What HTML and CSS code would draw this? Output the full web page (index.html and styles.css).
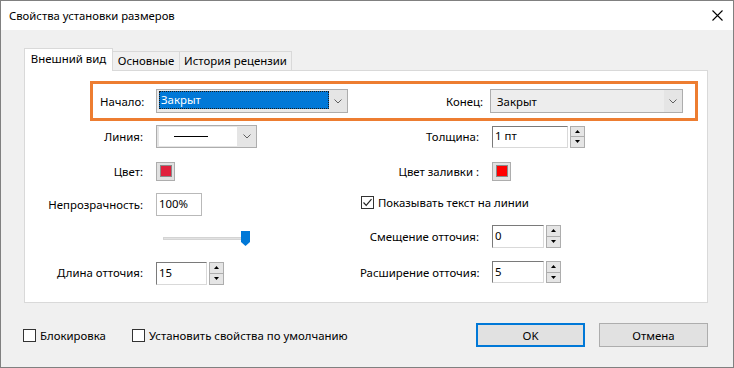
FILE: index.html
```html
<!DOCTYPE html>
<html lang="ru">
<head>
<meta charset="utf-8">
<title>Свойства установки размеров</title>
<link rel="stylesheet" href="styles.css">
</head>
<body>
<div class="window">
  <div class="titlebar">
    <span class="title">Свойства установки размеров</span>
    <svg class="close" width="11" height="11" viewBox="0 0 11 11"><path d="M0.5 0.5L10.5 10.5M10.5 0.5L0.5 10.5" stroke="#000" stroke-width="1.1" fill="none"/></svg>
  </div>
  <div class="content">
    <div class="tabs">
      <div class="tab tab-active">Внешний вид</div>
      <div class="tab tab-2">Основные</div>
      <div class="tab tab-3">История рецензии</div>
    </div>
    <div class="panel">
      <div class="highlight">
        <span class="hl-label">Начало:</span>
        <div class="combo combo-start">
          <span class="combo-text"><span class="combo-sel">Закрыт</span></span>
          <span class="combo-arrow"><svg width="8" height="5" viewBox="0 0 8 5"><path d="M0.5 0.5L4 4L7.5 0.5" stroke="#606060" fill="none"/></svg></span>
        </div>
        <span class="hl-label hl-label-end">Конец:</span>
        <div class="combo combo-end">
          <span class="combo-text combo-plain">Закрыт</span>
          <span class="combo-arrow"><svg width="8" height="5" viewBox="0 0 8 5"><path d="M0.5 0.5L4 4L7.5 0.5" stroke="#606060" fill="none"/></svg></span>
        </div>
      </div>

      <div class="grid">
        <span class="lbl">Линия:</span>
        <div class="cell">
          <div class="combo combo-line">
            <span class="line-box"><span class="line-sample"></span></span>
            <span class="combo-arrow"><svg width="8" height="5" viewBox="0 0 8 5"><path d="M0.5 0.5L4 4L7.5 0.5" stroke="#606060" fill="none"/></svg></span>
          </div>
        </div>
        <span class="lbl">Толщина:</span>
        <div class="cell">
          <div class="field"><span class="input input-thick">1 пт</span><span class="spin"><span class="spin-btn"><svg width="5" height="3" viewBox="0 0 5 3"><path d="M2.5 0L5 3H0Z" fill="#000"/></svg></span><span class="spin-btn"><svg width="5" height="3" viewBox="0 0 5 3"><path d="M0 0H5L2.5 3Z" fill="#000"/></svg></span></span></div>
        </div>

        <span class="lbl">Цвет:</span>
        <div class="cell"><span class="swatch"><span class="swatch-color swatch-crimson"></span></span></div>
        <span class="lbl">Цвет заливки :</span>
        <div class="cell"><span class="swatch"><span class="swatch-color swatch-red"></span></span></div>

        <span class="lbl">Непрозрачность:</span>
        <div class="cell"><span class="input input-opacity">100%</span></div>
        <div class="cell span2 check-cell">
          <span class="checkbox"><svg width="11" height="11" viewBox="0 0 11 11"><path d="M1.5 5.5L4.2 8.3L9.5 2.2" stroke="#222" stroke-width="1.2" fill="none"/></svg></span>
          <span>Показывать текст на линии</span>
        </div>

        <span class="lbl"></span>
        <div class="cell">
          <div class="slider">
            <span class="slider-track"></span>
            <svg class="slider-thumb" width="9" height="15" viewBox="0 0 9 15"><path d="M0 0H9V11L4.5 15L0 11Z" fill="#0078d7"/></svg>
          </div>
        </div>
        <span class="lbl">Смещение отточия:</span>
        <div class="cell">
          <div class="field"><span class="input input-num">0</span><span class="spin"><span class="spin-btn"><svg width="5" height="3" viewBox="0 0 5 3"><path d="M2.5 0L5 3H0Z" fill="#000"/></svg></span><span class="spin-btn"><svg width="5" height="3" viewBox="0 0 5 3"><path d="M0 0H5L2.5 3Z" fill="#000"/></svg></span></span></div>
        </div>

        <span class="lbl">Длина отточия:</span>
        <div class="cell cell-low">
          <div class="field"><span class="input input-len">15</span><span class="spin"><span class="spin-btn"><svg width="5" height="3" viewBox="0 0 5 3"><path d="M2.5 0L5 3H0Z" fill="#000"/></svg></span><span class="spin-btn"><svg width="5" height="3" viewBox="0 0 5 3"><path d="M0 0H5L2.5 3Z" fill="#000"/></svg></span></span></div>
        </div>
        <span class="lbl">Расширение отточия:</span>
        <div class="cell">
          <div class="field"><span class="input input-num input-short">5</span><span class="spin spin-short"><span class="spin-btn"><svg width="5" height="3" viewBox="0 0 5 3"><path d="M2.5 0L5 3H0Z" fill="#000"/></svg></span><span class="spin-btn"><svg width="5" height="3" viewBox="0 0 5 3"><path d="M0 0H5L2.5 3Z" fill="#000"/></svg></span></span></div>
        </div>
      </div>
    </div>

    <div class="footer">
      <label class="foot-check foot-check-1"><span class="checkbox"></span><span>Блокировка</span></label>
      <label class="foot-check"><span class="checkbox"></span><span>Установить свойства по умолчанию</span></label>
      <div class="buttons">
        <button class="btn btn-default">OK</button>
        <button class="btn">Отмена</button>
      </div>
    </div>
  </div>
</div>
</body>
</html>
```

FILE: styles.css
```css
* { box-sizing: border-box; }
html, body { margin: 0; padding: 0; }
body {
  width: 734px;
  height: 368px;
  overflow: hidden;
  font-family: "Noto Sans", "Open Sans", sans-serif;
  font-size: 11.4px;
  color: #000;
}
.window {
  width: 734px;
  height: 368px;
  border: 1px solid #808080;
  background: #f0f0f0;
  display: flex;
  flex-direction: column;
}
.titlebar {
  height: 29px;
  flex-shrink: 0;
  background: #fff;
  display: flex;
  align-items: center;
  justify-content: space-between;
  padding: 0 10px 0 8px;
}
.title { line-height: 16px; font-size: 11.3px; }
.close { display: block; }

.content {
  flex: 1;
  padding: 18px 25px 0 23px;
}
.tabs {
  display: flex;
  align-items: flex-end;
  height: 22px;
}
.tab {
  height: 19px;
  line-height: 17px;
  text-align: center;
  background: #f0f0f0;
  border: 1px solid #d9d9d9;
  border-left: none;
  border-bottom: none;
  white-space: nowrap;
}
.tab-active {
  width: 89px;
  height: 23px;
  line-height: 20px;
  margin-bottom: -1px;
  background: #fff;
  border-left: 1px solid #d9d9d9;
  position: relative;
  z-index: 1;
}
.tab-2 { width: 67px; }
.tab-3 { width: 112px; }

.panel {
  width: 684px;
  height: 233px;
  border: 1px solid #d9d9d9;
  background: #fff;
}

.highlight {
  margin: 10px 0 0 65px;
  width: 608px;
  height: 40px;
  border: 3px solid #ed7d31;
  display: flex;
  align-items: center;
  padding: 0 12px 0 7px;
}
.hl-label { width: 56px; white-space: nowrap; }
.hl-label-end { flex: 1; text-align: right; padding-right: 7px; }

.combo {
  display: flex;
  height: 24px;
  border: 1px solid #adadad;
  background: #e9e9e9;
}
.combo-start { width: 192px; }
.combo-end { width: 193px; }
.combo-text {
  flex: 1;
  display: flex;
  padding: 1px 0 3px 2px;
}
.combo-sel {
  flex: 1;
  background: #0078d7;
  color: #fff;
  padding-left: 2px;
  line-height: 17px;
  outline: 1px dotted #1a1a1a;
  outline-offset: -1px;
}
.combo-plain {
  padding: 0 0 0 6px;
  align-items: center;
  background: #ededed;
}
.combo-arrow {
  width: 18px;
  display: flex;
  align-items: center;
  justify-content: center;
  background: #e5e5e5;
}
.combo-arrow svg { display: block; }

.grid {
  display: grid;
  grid-template-columns: 131px 204px 132px 1fr;
  grid-template-rows: 31px 38px 28px 36px 36px;
  align-items: center;
}
.lbl {
  text-align: right;
  padding-right: 13px;
  white-space: nowrap;
}
.cell { display: flex; align-items: center; }
.span2 { grid-column: span 2; }

.combo-line {
  width: 101px;
  height: 23px;
  background: #e5e5e5;
}
.line-box {
  flex: 1;
  margin: 1px 0 1px 2px;
  background: #fff;
  display: flex;
  align-items: center;
  padding-left: 15px;
}
.line-sample {
  width: 34px;
  height: 1px;
  background: #000;
}
.combo-line .combo-arrow { width: 19px; }

.swatch {
  width: 19px;
  height: 19px;
  border: 1px solid #adadad;
  background: #e1e1e1;
  display: flex;
  align-items: center;
  justify-content: center;
}
.swatch-color {
  width: 12px;
  height: 12px;
  border: 1px solid #8a8a8a;
}
.swatch-crimson { background: #e0203c; }
.swatch-red { background: #ff0000; }

.field { display: flex; align-items: stretch; }
.input {
  display: flex;
  align-items: center;
  height: 23px;
  padding: 0 0 2px 2px;
  background: #fff;
  border: 1px solid;
  border-color: #7a7a7a #d9d9d9 #d9d9d9 #7a7a7a;
}
.input-thick { width: 76px; height: 22px; }
.input-opacity {
  width: 46px;
  border-color: #b9b9b9;
}
.input-num { width: 52px; }
.input-len { width: 51px; }
.input-short { height: 22px; }

.spin {
  display: flex;
  flex-direction: column;
  width: 15px;
  margin-left: 2px;
}
.spin-btn {
  flex: 1;
  display: flex;
  align-items: center;
  justify-content: center;
  background: #e5e5e5;
  border: 1px solid #adadad;
}
.spin-btn + .spin-btn { border-top: none; }
.spin-btn svg { display: block; }

.check-cell {
  align-self: start;
  margin-top: 5px;
  padding-left: 1px;
  gap: 4px;
}
.checkbox {
  width: 13px;
  height: 13px;
  border: 1px solid #333;
  background: #fff;
  display: flex;
  align-items: center;
  justify-content: center;
  flex-shrink: 0;
}
.checkbox svg { display: block; }

.slider {
  display: flex;
  align-items: center;
  margin: 5px 0 0 7px;
  height: 15px;
}
.slider-track {
  width: 80px;
  height: 3px;
  background: #e2e2e2;
  border: 1px solid #d4d4d4;
}
.slider-thumb { display: block; margin-left: -2px; }
.cell-low { margin-top: 2px; }

.footer {
  margin-top: 20px;
  height: 24px;
  display: flex;
  align-items: center;
}
.foot-check {
  display: flex;
  align-items: center;
  gap: 4px;
  white-space: nowrap;
}
.foot-check-1 { width: 109px; margin-left: -1px; }
.buttons {
  margin-left: auto;
  display: flex;
  gap: 14px;
}
.btn {
  width: 109px;
  height: 24px;
  border: 1px solid #adadad;
  background: #e1e1e1;
  font: inherit;
  color: #000;
  padding: 0;
}
.btn-default {
  border: 2px solid #0078d7;
}
```
